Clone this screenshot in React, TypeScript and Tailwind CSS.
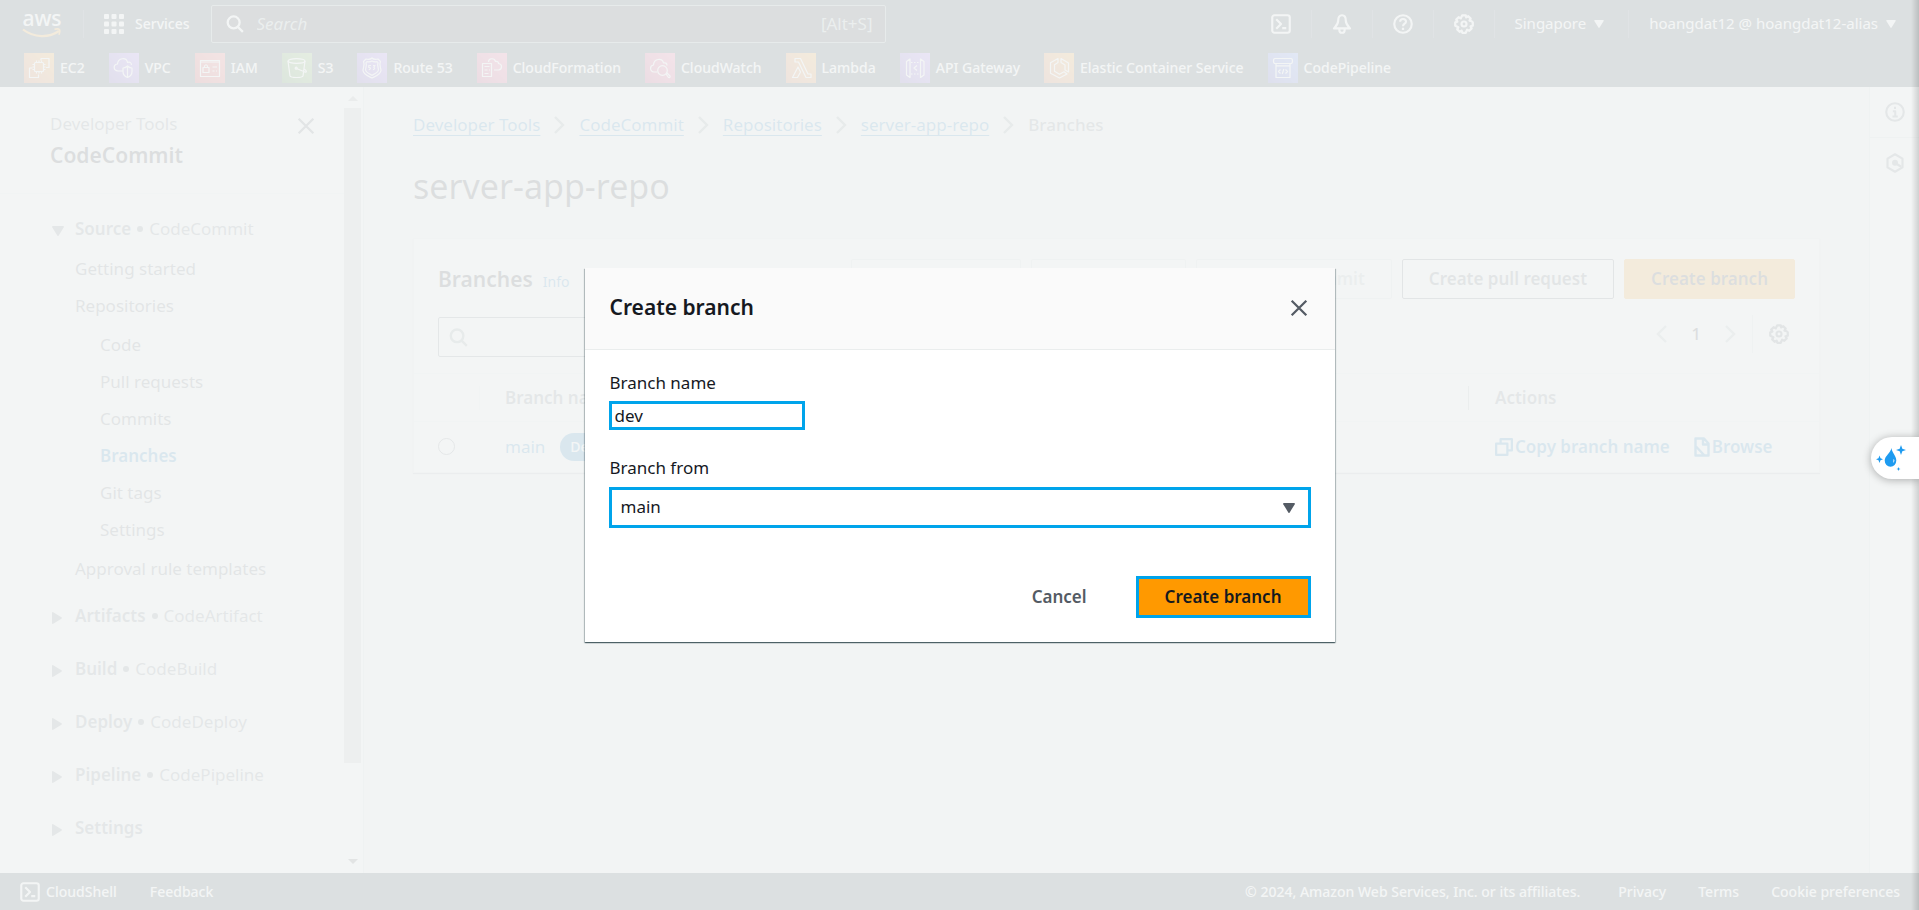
import { useState, type ReactNode } from "react";

type IconProps = { className?: string };

function Svg({ className, box = 16, children }: { className?: string; box?: number; children: ReactNode }) {
  return (
    <svg
      viewBox={`0 0 ${box} ${box}`}
      className={className}
      fill="none"
      stroke="currentColor"
      strokeWidth={box === 16 ? 2 : 1.2}
      strokeLinejoin="round"
      aria-hidden="true"
    >
      {children}
    </svg>
  );
}

const ShellIcon = ({ className }: IconProps) => (
  <Svg className={className}>
    <rect x="1" y="1" width="14" height="14" rx="1.8" strokeWidth="1.7" />
    <path d="M4.2 4.2 8 8l-3.8 3.8M9 11.3h3.2" strokeWidth="1.7" />
  </Svg>
);

const BellIcon = ({ className }: IconProps) => (
  <Svg className={className}>
    <path d="M8 1C6 1 5 2.800 5 5c0 3.200-1.500 4.400-3.400 6.500h12.800C12.500 9.400 11 8.200 11 5c0-2.200-1-4-3-4Z" strokeWidth="1.7" />
    <path d="M5.900 11.500v1.400a2.100 2.100 0 0 0 4.200 0v-1.400" strokeWidth="1.700" />
  </Svg>
);

const HelpIcon = ({ className }: IconProps) => (
  <Svg className={className}>
    <circle cx="8" cy="8" r="7" strokeWidth="1.700" />
    <path d="M5.700 6.200C5.700 4.800 6.700 4 8 4s2.400.8 2.400 2.100C10.400 7.700 8 7.800 8 9.700" strokeWidth="1.600" />
    <path d="M8 11v1.800" strokeWidth="1.800" />
  </Svg>
);

const GearIcon = ({ className }: IconProps) => (
  <Svg className={className}>
    <path
      d="M6.600 1h2.800l.4 1.700 1.600-.9 1.900 1.900-.9 1.600 1.700.5.9.8v2.800l-1.800.4.9 1.700-1.900 1.900-1.700-.9L9.400 15H6.600l-.5-1.700-1.600.9-1.900-1.900.9-1.700L1 9.400V6.600l1.700-.5-.9-1.600 1.900-1.900 1.700.9Z"
      strokeWidth="1.800"
    />
    <circle cx="8" cy="8" r="2" strokeWidth="1.700" />
  </Svg>
);

const SearchIcon = ({ className }: IconProps) => (
  <Svg className={className}>
    <circle cx="6.800" cy="6.600" r="5.300" />
    <path d="m10.600 10.600 4.400 4.400" />
  </Svg>
);

const CloseIcon = ({ className }: IconProps) => (
  <Svg className={className}>
    <path d="m1.500 1.500 13 13M14.500 1.500l-13 13" />
  </Svg>
);

const CaretDown = ({ className }: IconProps) => (
  <svg viewBox="0 0 12 10" className={className} fill="currentColor" aria-hidden="true">
    <path d="M1 0h10q1.300.1.800 1.200L6.700 9.400q-.7 1-1.400 0L.2 1.200Q-.3.1 1 0Z" />
  </svg>
);

const CaretRight = ({ className }: IconProps) => (
  <svg viewBox="0 0 10 12" className={className} fill="currentColor" aria-hidden="true">
    <path d="M0 1v10q.1 1.300 1.200.8l8.200-5.100q1-.7 0-1.400L1.200.2Q.1-.3 0 1Z" />
  </svg>
);

const Chevron = ({ className, left = false }: IconProps & { left?: boolean }) => (
  <svg viewBox="0 0 11 18" className={className} fill="none" stroke="currentColor" strokeWidth="2.400" aria-hidden="true">
    <path d={left ? "M10 1 2 9l8 8" : "m1 1 8 8-8 8"} />
  </svg>
);

const serviceIcons: Record<string, ReactNode> = {
  EC2: (
    <>
      <rect x="10.500" y="9.500" width="9" height="9" rx="1" />
      <path d="M12.500 9.500v-2M15 9.500v-2M17.500 9.500v-2M12.500 20.500v-2M15 20.500v-2M17.500 20.500v-2M10.500 11.500h-2M10.500 14h-2M10.500 16.500h-2M21.500 11.500h-2M21.500 14h-2M21.500 16.500h-2" />
      <path d="M17 7.500v-2h8v9h-3M8.500 15h-3v9.500h9v-3" />
    </>
  ),
  VPC: (
    <>
      <path d="M14 18H9c-5-.5-5-6.500-.5-7C9 4.500 17.500 4 18.500 9.500c2.500-1 4 .5 4 2.500" />
      <path d="M14 15c2.500 0 3.500-1 4.500-2 1 1 2.500 2 4.500 2v3.500c0 3-2 5-4.500 6-2.500-1-4.500-3-4.500-6ZM18.500 13.500V24" />
    </>
  ),
  IAM: (
    <>
      <path d="M5.500 7.500h19v16h-19ZM5.500 9h19" />
      <rect x="8" y="14.500" width="6" height="5" />
      <path d="M9.500 14.500v-1.500q1.500-2.500 3 0v1.500M17.500 14h4.500M17.500 18h2M21 18h1" />
    </>
  ),
  S3: (
    <>
      <ellipse cx="14.500" cy="8" rx="8.500" ry="2.300" />
      <path d="m6 8 2 15c1 2 12 2 13 0l2-15M14.500 15.500l8.500 3.500c2 .7 1.800-1.500-.8-3" />
      <circle cx="14.200" cy="15.200" r="1" />
    </>
  ),
  "Route 53": (
    <>
      <path d="M15 5c1.500 1.500 4 1.500 6 1l2.500 2.500c-2 4 .7 6.500.5 9-.4 4-5 5.500-9 7.500-4-2-8.600-3.500-9-7.500-.2-2.500 2.500-5 .5-9L9 6c2 .5 4.500.5 6-1Z" />
      <path d="M15 8c1.500 1 3.500 1 5 .7l1 1c-1 3 .5 5 .4 7.300-.3 2.500-3.400 3.700-6.400 5.300-3-1.600-6.100-2.800-6.400-5.300-.1-2.300 1.400-4.300.4-7.300l1-1c1.500.3 3.500.3 5-.7Z" />
      <path d="M14 12.500h-2.200v2h1.200q1.200 1.500-1.200 2.300M16 12.500h2l-1.200 1.800q2 1.200-.8 2.500" />
    </>
  ),
  CloudFormation: (
    <>
      <path d="M5.500 10.500h9v13h-9ZM7.500 13.500h5M7.500 17h3M7.500 20.500h4M12 17h1" />
      <path d="M11.500 9c0-4 6-4.500 7-.5 2-.5 3 .5 3 2 4 .5 4 6 0 6.500h-4.500" />
    </>
  ),
  CloudWatch: (
    <>
      <path d="M12 19H9c-4.500-.5-4.500-6.500-.5-7C9 5 17.500 5 18.500 10c2-.5 3.500 0 3.500 2.500" />
      <circle cx="17.500" cy="17.500" r="4.800" />
      <path d="m21 21 2.500 3.500q2 .5 1.500-1.500L22 20" />
    </>
  ),
  Lambda: (
    <>
      <path d="M9 5.500h5.500L22 21h3v3.500h-5L12.500 9H9Z" />
      <path d="m12 14 2.500 5-3 5.500h-5Z" />
    </>
  ),
  "API Gateway": (
    <>
      <path d="M6.500 8.500 10 6v18.500L6.500 22ZM24 8.500 20.500 6v18.500L24 22ZM17 12.500 14 15l3 2.500" />
      <path d="M11 9.500h9M11 21h9" strokeDasharray="1.500 1.500" />
    </>
  ),
  "Elastic Container Service": (
    <>
      <path d="m14 5.500-7.500 4.300v10.500L15.500 25l7.500-4-3-2.200-4.500 2.500-5-3v-6.500L14 9.500ZM17 5.500 24.500 10v9L21 17v-5l-4-2.500Z" />
    </>
  ),
  CodePipeline: (
    <>
      <path d="M7 5.500h16q1.500 0 1.500 2.500t-1.500 2.500H7q-1.500 0-1.500-2.500t1.500-2.500ZM8 12.800h14v11.700H8ZM8 10.500v2.300M22 10.500v2.300M12.500 16.500l-2 2 2 2M17.500 16.500l2 2-2 2M15.800 16l-1.500 5" />
    </>
  ),
};

const favorites = [
  { name: "EC2", tint: "from-[#c8511b] to-[#ff9900]" },
  { name: "VPC", tint: "from-[#4d27a8] to-[#a166ff]" },
  { name: "IAM", tint: "from-[#bd0816] to-[#ff5252]" },
  { name: "S3", tint: "from-[#1b660f] to-[#6cae3e]" },
  { name: "Route 53", tint: "from-[#4d27a8] to-[#a166ff]" },
  { name: "CloudFormation", tint: "from-[#b0084d] to-[#ff4f8b]" },
  { name: "CloudWatch", tint: "from-[#b0084d] to-[#ff4f8b]" },
  { name: "Lambda", tint: "from-[#c8511b] to-[#ff9900]" },
  { name: "API Gateway", tint: "from-[#4d27a8] to-[#a166ff]" },
  { name: "Elastic Container Service", tint: "from-[#c8511b] to-[#ff9900]" },
  { name: "CodePipeline", tint: "from-[#2e27ad] to-[#527fff]" },
];

const Divider = () => <span className="h-7 w-px bg-[#414d5c]" />;

function TopBar() {
  return (
    <header className="shrink-0 bg-[#1d2d35] text-sm font-medium text-white">
      <div className="flex h-12 items-center pr-[23px] pl-[22px]">
        <a href="#home" aria-label="AWS home" className="mr-[21px] flex h-8 w-10 flex-col items-center">
          <span className="h-5 text-[21px] leading-[20px]">aws</span>
          <svg viewBox="0 0 40 10" className="h-[10px] w-10 fill-none stroke-[#ff9900]" strokeWidth="2.200" aria-hidden="true">
            <path d="M1 1.500c11 8.500 26 8.500 36 1.500" />
            <path d="M32.500 1.200c5-.9 6.500-.3 4.500 5.500" strokeWidth="1.600" />
          </svg>
        </a>
        <Divider />
        <button type="button" className="ml-5 flex items-center gap-[11px]">
          <svg viewBox="0 0 20 20" className="size-5 fill-current" aria-hidden="true">
            {[0, 7.500, 15].map((y) =>
              [0, 7.500, 15].map((x) => <rect key={`${x}-${y}`} x={x} y={y} width="5" height="5" rx="1" />),
            )}
          </svg>
          Services
        </button>
        <label className="ml-[21px] flex h-[38px] w-[675px] items-center rounded-xs border border-[#879596] bg-[#16191f] px-3 text-[#aab7b8]">
          <SearchIcon className="mx-[2px] size-[18px] text-white" />
          <span className="sr-only">Search services</span>
          <input
            type="search"
            placeholder="Search"
            className="ml-[7px] min-w-0 flex-1 bg-transparent px-1 text-[17px] font-normal outline-none placeholder:text-[#aab7b8] placeholder:italic"
          />
          <span className="text-[17px] font-normal">[Alt+S]</span>
        </label>
        <div className="ml-auto flex items-center gap-5">
          <button type="button" aria-label="CloudShell"><ShellIcon className="size-5" /></button>
          <Divider />
          <button type="button" aria-label="Notifications"><BellIcon className="size-5" /></button>
          <Divider />
          <button type="button" aria-label="Help"><HelpIcon className="size-5" /></button>
          <Divider />
          <button type="button" aria-label="Settings"><GearIcon className="size-5" /></button>
          <Divider />
          <button type="button" className="flex items-center gap-2 pr-1 text-[15px] font-normal">
            Singapore <CaretDown className="h-2 w-[10px]" />
          </button>
          <Divider />
          <button type="button" className="flex items-center gap-2 text-[15px] font-normal">
            hoangdat12 @ hoangdat12-alias <CaretDown className="h-2 w-[10px]" />
          </button>
        </div>
      </div>
      <nav className="flex h-[39px] items-center gap-6 pl-6">
        {favorites.map(({ name, tint }) => (
          <a key={name} href={`#${name}`} className="flex items-center gap-[6px] whitespace-nowrap">
            <span className={`size-[30px] bg-linear-45 ${tint}`}>
              <Svg box={30} className="size-[30px]">{serviceIcons[name]}</Svg>
            </span>
            {name}
          </a>
        ))}
      </nav>
    </header>
  );
}

const sections = [
  { title: "Artifacts", service: "CodeArtifact" },
  { title: "Build", service: "CodeBuild" },
  { title: "Deploy", service: "CodeDeploy" },
  { title: "Pipeline", service: "CodePipeline" },
  { title: "Settings", service: "" },
];

function SectionTitle({ title, service, open = false }: { title: string; service: string; open?: boolean }) {
  return (
    <button type="button" className="flex h-6 items-center text-[#687078]">
      <span className="flex w-[25px] pt-1 pl-[2px]">
        {open ? <CaretDown className="h-[10px] w-3" /> : <CaretRight className="h-3 w-[10px]" />}
      </span>
      <span className="flex items-center gap-[6px]">
        <span className="font-semibold">{title}</span>
        {service && <span className="size-[6px] rounded-full bg-current" />}
        {service && <span>{service}</span>}
      </span>
    </button>
  );
}

function NavItem({ children, active = false }: { children: ReactNode; active?: boolean }) {
  return (
    <li className="flex h-[37px] items-center">
      <a href="#nav" className={active ? "font-semibold text-[#0073bb]" : "text-[#545b64]"}>
        {children}
      </a>
    </li>
  );
}

function Sidebar() {
  return (
    <aside className="flex w-[364px] shrink-0 border-r border-[#d5dbdb] bg-[#fafafa]">
      <div className="flex min-w-0 flex-1 flex-col text-[17px] leading-6">
        <div className="flex justify-between border-b border-[#eaeded] pt-[25px] pr-[29px] pb-6 pl-[50px]">
          <div className="flex flex-col gap-[5px]">
            <span className="text-[#687078]">Developer Tools</span>
            <span className="text-[21px] leading-7 font-semibold text-[#16191f]">CodeCommit</span>
          </div>
          <button type="button" aria-label="Close navigation" className="mt-[5px] self-start text-[#545b64]">
            <CloseIcon className="size-[18px]" />
          </button>
        </div>
        <nav className="flex flex-col pt-[23px] pl-[50px]">
          <SectionTitle title="Source" service="CodeCommit" open />
          <ul className="mt-[9px] mb-[17px] pl-[25px]">
            <NavItem>Getting started</NavItem>
            <NavItem>Repositories</NavItem>
            <li className="my-[2px]">
              <ul className="pl-[25px]">
                <NavItem>Code</NavItem>
                <NavItem>Pull requests</NavItem>
                <NavItem>Commits</NavItem>
                <NavItem active>Branches</NavItem>
                <NavItem>Git tags</NavItem>
                <NavItem>Settings</NavItem>
              </ul>
            </li>
            <NavItem>Approval rule templates</NavItem>
          </ul>
          <div className="flex flex-col gap-[29px]">
            {sections.map((s) => (
              <SectionTitle key={s.title} {...s} />
            ))}
          </div>
        </nav>
      </div>
      <div className="mr-[2px] flex w-[17px] flex-col items-center bg-[#f8f8f8] py-[9px]" aria-hidden="true">
        <svg viewBox="0 0 10 5" className="h-[5px] w-[10px] fill-[#a3a3a3]"><path d="M0 5 5 0l5 5Z" /></svg>
        <div className="mt-[7px] w-full flex-[655] bg-[#c1c1c1]" />
        <div className="flex-[96]" />
        <svg viewBox="0 0 10 5" className="h-[5px] w-[10px] fill-[#505050]"><path d="m0 0 5 5 5-5Z" /></svg>
      </div>
    </aside>
  );
}

const crumbs = ["Developer Tools", "CodeCommit", "Repositories", "server-app-repo"];

const baseButton = "h-10 rounded-xs border px-[26px] font-semibold whitespace-nowrap";

function BranchesPanel() {
  return (
    <section className="mt-[30px] border border-[#e3e7e7] bg-[#fafafa] shadow-[0_1px_1px_rgba(0,28,36,0.3)]">
      <div className="flex items-center justify-between px-6 pt-5">
        <h2 className="flex items-baseline gap-[10px] text-[21px] font-semibold text-[#16191f]">
          Branches
          <a href="#info" className="text-sm font-normal text-[#0073bb]">Info</a>
        </h2>
        <div className="flex gap-[10px]">
          <button type="button" disabled className={`${baseButton} border-[#d5dbdb] text-[#aab7b8]`}>Delete branch</button>
          <button type="button" disabled className={`${baseButton} border-[#d5dbdb] text-[#aab7b8]`}>View branch</button>
          <button type="button" disabled className={`${baseButton} border-[#d5dbdb] text-[#aab7b8]`}>View last commit</button>
          <button type="button" className={`${baseButton} border-[#545b64] text-[#545b64]`}>Create pull request</button>
          <button type="button" className={`${baseButton} border-[#ff9900] bg-[#ff9900] text-[#16191f]`}>Create branch</button>
        </div>
      </div>
      <div className="mt-[18px] flex items-start justify-between px-6">
        <label className="flex h-10 w-1/2 items-center rounded-xs border border-[#687078] px-[10px] text-[#879596]">
          <SearchIcon className="size-[19px]" />
          <span className="sr-only">Find branches</span>
          <input type="search" className="ml-2 flex-1 bg-transparent outline-none" />
        </label>
        <div className="flex h-[34px] items-center pr-[6px]">
          <button type="button" aria-label="Previous page" className="text-[#aab7b8]"><Chevron left className="h-[18px] w-[11px]" /></button>
          <span className="w-[58px] text-center font-medium text-[#16191f]">1</span>
          <button type="button" aria-label="Next page" className="text-[#aab7b8]"><Chevron className="h-[18px] w-[11px]" /></button>
          <span className="mx-4 h-[38px] w-px bg-[#d5dbdb]" />
          <button type="button" aria-label="Preferences" className="text-[#545b64]"><GearIcon className="size-5" /></button>
        </div>
      </div>
      <table className="mt-4 w-full table-fixed text-left">
        <colgroup>
          <col className="w-[66px]" />
          <col />
          <col className="w-[351px]" />
        </colgroup>
        <thead>
          <tr className="h-12 border-y border-[#eaeded] text-[#687078]">
            <th><span className="ml-auto block h-6 w-px bg-[#eaeded]"><span className="sr-only">Select</span></span></th>
            <th className="pl-[25px] font-semibold">Branch name</th>
            <th className="font-semibold"><span className="flex h-6 items-center border-l border-[#aab7b8] pl-[26px]">Actions</span></th>
          </tr>
        </thead>
        <tbody>
          <tr className="h-[50px]">
            <td className="pl-6">
              <input
                type="radio"
                name="branch"
                aria-label="Select main"
                className="block size-[17px] appearance-none rounded-full border border-[#687078] bg-white"
              />
            </td>
            <td className="pl-[25px]">
              <span className="flex items-center gap-[15px]">
                <a href="#main" className="text-[#0073bb]">main</a>
                <span className="rounded-full bg-[#0073bb] px-[10px] text-sm leading-7 font-medium text-white">Default branch</span>
              </span>
            </td>
            <td>
              <span className="flex items-center gap-6 pl-[27px] font-semibold whitespace-nowrap text-[#0073bb]">
                <button type="button" className="flex items-center gap-[2px]">
                  <Svg className="size-[18px]">
                    <path d="M1 5h10v10H1Z" />
                    <path d="M5 4.500V1h10v10h-3.500" />
                  </Svg>
                  Copy branch name
                </button>
                <a href="#browse" className="flex items-center gap-[2px]">
                  <svg viewBox="0 0 16 20" className="h-5 w-4 fill-none stroke-current" strokeWidth="2.400" strokeLinejoin="round" aria-hidden="true">
                    <path d="M1.500 1.500H10l4.500 5v12h-13ZM9 1.500v6h5.500M2 9.500l8.500 9" />
                  </svg>
                  Browse
                </a>
              </span>
            </td>
          </tr>
        </tbody>
      </table>
    </section>
  );
}

function Main() {
  return (
    <main className="min-w-0 flex-1 bg-[#f2f3f3] px-[49px] pt-[26px] text-[17px] leading-6">
      <nav aria-label="Breadcrumb">
        <ol className="flex items-center gap-[14px]">
          {crumbs.map((crumb) => (
            <li key={crumb} className="flex items-center gap-[14px]">
              <a href="#crumb" className="text-[#0073bb] underline underline-offset-4">{crumb}</a>
              <Chevron className="h-[18px] w-[11px] text-[#879596]" />
            </li>
          ))}
          <li className="font-medium text-[#687078]">Branches</li>
        </ol>
      </nav>
      <h1 className="mt-[27px] text-[34px] leading-[44px] font-normal text-[#16191f]">server-app-repo</h1>
      <BranchesPanel />
    </main>
  );
}

function ToolRail() {
  return (
    <aside className="flex w-[50px] shrink-0 flex-col border-l border-[#d5dbdb] bg-[#fafafa] text-[#687078]">
      <button type="button" aria-label="Info" className="flex h-[51px] items-center justify-center border-b border-[#d5dbdb]">
        <Svg className="size-5">
          <circle cx="8" cy="8" r="7" strokeWidth="1.700" />
          <path d="M8 3.700v1.800M6.300 7.300h1.900v4M6 11.500h4.200" strokeWidth="1.600" />
        </Svg>
      </button>
      <button type="button" aria-label="Tools" className="flex h-[50px] items-center justify-center">
        <Svg className="size-5">
          <path d="m8 1 6 3.500v7L8 15l-6-3.500v-7Z" strokeWidth="1.700" />
          <path d="m8 8 5 3" strokeWidth="1.800" />
          <circle cx="8" cy="7.700" r="1.400" fill="currentColor" />
        </Svg>
      </button>
    </aside>
  );
}

function Footer() {
  return (
    <footer className="flex h-[37px] shrink-0 items-center bg-[#1d2d35] pt-px pr-[19px] pl-5 text-sm font-medium text-white">
      <button type="button" className="flex items-center gap-[6px]">
        <ShellIcon className="size-5" />
        CloudShell
      </button>
      <a href="#feedback" className="ml-[33px]">Feedback</a>
      <div className="ml-auto flex gap-8">
        <span className="mr-[6px]">© 2024, Amazon Web Services, Inc. or its affiliates.</span>
        <a href="#privacy">Privacy</a>
        <a href="#terms">Terms</a>
        <a href="#cookies">Cookie preferences</a>
      </div>
    </footer>
  );
}

function CreateBranchDialog() {
  const [name, setName] = useState("dev");
  return (
    <form
      role="dialog"
      aria-modal="true"
      aria-labelledby="dialog-title"
      onSubmit={(e) => e.preventDefault()}
      className="w-[750px] bg-white text-[17px] leading-6 text-[#16191f] shadow-[0_1px_1px_rgba(0,28,36,0.5),1px_1px_1px_rgba(0,28,36,0.2),-1px_1px_1px_rgba(0,28,36,0.2)]"
    >
      <header className="flex items-center justify-between border-b border-[#eaeded] bg-[#fafafa] pt-[25px] pr-6 pb-7 pl-[25px]">
        <h2 id="dialog-title" className="text-[21px] leading-7 font-semibold">Create branch</h2>
        <button type="button" aria-label="Close" className="mr-[3px] pt-[2px] text-[#545b64]">
          <CloseIcon className="size-[18px]" />
        </button>
      </header>
      <div className="px-6 pt-[21px]">
        <label htmlFor="branch-name" className="mb-[6px] block pl-px">Branch name</label>
        <input
          id="branch-name"
          value={name}
          onChange={(e) => setName(e.target.value)}
          className="block h-[29px] w-[196px] border-3 border-[#00a4eb] bg-white px-[3px] outline-none"
        />
        <label htmlFor="branch-from" className="mt-[26px] mb-[7px] block pl-px">Branch from</label>
        <div className="relative">
          <select
            id="branch-from"
            className="block h-[41px] w-full appearance-none border-3 border-[#00a4eb] bg-white pb-[2px] pl-[9px] outline-none"
          >
            <option>main</option>
          </select>
          <CaretDown className="pointer-events-none absolute top-4 right-4 h-[10px] w-3 text-[#545b64]" />
        </div>
      </div>
      <footer className="flex justify-end gap-6 px-6 pt-12 pb-6 font-semibold">
        <button type="button" className="px-[25px] text-[#545b64]">Cancel</button>
        <button type="submit" className="h-[42px] border-3 border-[#00a4eb] bg-[#ff9900] px-[26px]">Create branch</button>
      </footer>
    </form>
  );
}

export default function App() {
  return (
    <div className="relative flex h-screen flex-col overflow-hidden font-['Noto_Sans',sans-serif]">
      <TopBar />
      <div className="flex min-h-0 flex-1">
        <Sidebar />
        <Main />
        <ToolRail />
      </div>
      <Footer />
      <div className="absolute inset-0 flex items-center justify-center bg-[#f2f4f4]/90">
        <CreateBranchDialog />
      </div>
      <div className="pointer-events-none absolute inset-y-0 right-0 w-2 bg-linear-to-l from-black/15 to-transparent" />
      <button
        type="button"
        aria-label="Assistant"
        className="absolute top-[437px] right-0 flex h-[42px] w-12 items-center rounded-l-full bg-white pl-[5px] shadow-[0_1px_8px_rgba(0,0,0,0.3)]"
      >
        <svg viewBox="0 0 30 26" className="h-[26px] w-[30px] fill-[#1e9bf0]" aria-hidden="true">
          <path d="M15.500 3c.4 5 4.800 7.500 4.800 12.500a5.800 6.200 0 0 1-11.600 0C8.700 11 14.500 8 15.500 3Z" />
          <path d="M17.500 14q2 1.500-.3 4Z" fill="#fff" />
          <path d="m25 0 1.300 3.700L30 5l-3.700 1.300L25 10l-1.300-3.700L20 5l3.700-1.300ZM3.500 10.500l1 2.700 2.500 1-2.500 1-1 2.700-1-2.700-2.500-1 2.500-1ZM22.500 22l.6 1.400 1.400.6-1.400.6-.6 1.400-.6-1.400-1.400-.6 1.400-.6Z" />
        </svg>
      </button>
    </div>
  );
}
